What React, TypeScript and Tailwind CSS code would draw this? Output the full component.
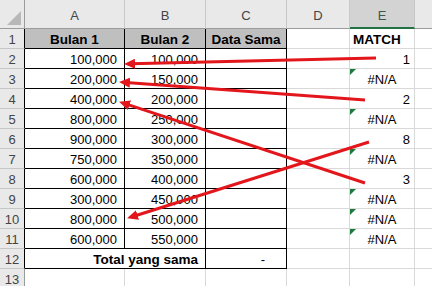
import React from "react";

interface Row {
  a: string;
  b: string;
  e: string;
}

const rows: Row[] = [
  { a: "100,000", b: "100,000", e: "1" },
  { a: "200,000", b: "150,000", e: "#N/A" },
  { a: "400,000", b: "200,000", e: "2" },
  { a: "800,000", b: "250,000", e: "#N/A" },
  { a: "900,000", b: "300,000", e: "8" },
  { a: "750,000", b: "350,000", e: "#N/A" },
  { a: "600,000", b: "400,000", e: "3" },
  { a: "300,000", b: "450,000", e: "#N/A" },
  { a: "800,000", b: "500,000", e: "#N/A" },
  { a: "600,000", b: "550,000", e: "#N/A" },
];

// arrows drawn on top of the sheet: [tailX, tailY, tipX, tipY]
const arrows: [number, number, number, number][] = [
  [376, 58, 125, 64],
  [365, 100, 120, 82],
  [365, 183, 120, 102],
  [369, 142, 128, 218],
];

const grid = "border-[#d9d9d9]";

const RowHead: React.FC<{ n: number; table?: boolean }> = ({ n, table }) => (
  <div
    className={`bg-[#e9e9e9] border-b border-b-[#c6c6c6] border-r flex items-end justify-center text-[13px] leading-[17px] text-[#444] ${
      table ? "border-r-black" : "border-r-[#9b9b9b]"
    }`}
  >
    {n}
  </div>
);

const ErrorFlag: React.FC = () => (
  <div className="absolute left-0 top-0 w-0 h-0 border-t-[6px] border-t-[#1d7a3a] border-r-[6px] border-r-transparent" />
);

const App: React.FC = () => {
  return (
    <div
      className="w-[432px] h-[286px] overflow-hidden relative bg-white text-black"
      style={{ fontFamily: '"Liberation Sans", Arial, sans-serif' }}
    >
      <div className="grid grid-cols-[25px_100px_81px_81px_63px_65px_1fr] grid-rows-[29px_repeat(13,20px)] text-[13px] leading-[16px]">
        {/* Column headers */}
        <div className="bg-[#e9e9e9] border-b border-r border-[#9b9b9b] relative">
          <div className="absolute right-[3px] bottom-[3px] w-0 h-0 border-l-[14px] border-l-transparent border-b-[14px] border-b-[#b8b8b8]" />
        </div>
        {["A", "B", "C", "D"].map((c) => (
          <div
            key={c}
            className="bg-[#e9e9e9] border-b border-b-[#9b9b9b] border-r border-r-[#c8c8c8] flex items-end justify-center pb-[4px] text-[13px] text-[#444]"
          >
            {c}
          </div>
        ))}
        <div className="bg-[#d3d3d3] border-b-2 border-b-[#217346] border-r border-r-[#c8c8c8] flex items-end justify-center pb-[3px] text-[13px] text-[#3c5a48]">
          E
        </div>
        <div className="bg-[#e9e9e9] border-b border-b-[#9b9b9b]" />

        {/* Row 1 */}
        <RowHead n={1} table />
        {["Bulan 1", "Bulan 2", "Data Sama"].map((h) => (
          <div
            key={h}
            className="bg-[#bfbfbf] border-r border-b border-black flex items-end justify-center font-bold text-[13.5px]"
          >
            {h}
          </div>
        ))}
        <div className={`border-r border-b ${grid}`} />
        <div className={`border-r border-b ${grid} flex items-end pl-[3px] font-bold text-[13.5px]`}>MATCH</div>
        <div className={`border-b ${grid}`} />

        {/* Rows 2-11 */}
        {rows.map((r, i) => {
          const isErr = r.e === "#N/A";
          return (
            <React.Fragment key={i}>
              <RowHead n={i + 2} table />
              <div className="border-r border-b border-black flex items-end justify-end pr-[7px]">{r.a}</div>
              <div className="border-r border-b border-black flex items-end justify-end pr-[7px]">{r.b}</div>
              <div className="border-r border-b border-black" />
              <div className={`border-r border-b ${grid}`} />
              <div
                className={`relative border-r border-b ${grid} flex items-end ${
                  isErr ? "justify-center" : "justify-end pr-[4px]"
                }`}
              >
                {isErr && <ErrorFlag />}
                {r.e}
              </div>
              <div className={`border-b ${grid}`} />
            </React.Fragment>
          );
        })}

        {/* Row 12 */}
        <RowHead n={12} table />
        <div className="col-span-2 border-r border-b border-black flex items-end justify-end pr-[7px] font-bold text-[13.5px]">
          Total yang sama
        </div>
        <div className="border-r border-b border-black flex items-end justify-end pr-[21px]">-</div>
        <div className={`border-r border-b ${grid}`} />
        <div className={`border-r border-b ${grid}`} />
        <div className={`border-b ${grid}`} />

        {/* Row 13 */}
        <RowHead n={13} />
        <div className={`border-r border-b ${grid}`} />
        <div className={`border-r border-b ${grid}`} />
        <div className={`border-r border-b ${grid}`} />
        <div className={`border-r border-b ${grid}`} />
        <div className={`border-r border-b ${grid}`} />
        <div className={`border-b ${grid}`} />
      </div>

      {/* Red arrows overlay */}
      <svg className="absolute inset-0 pointer-events-none" width="432" height="286" viewBox="0 0 432 286">
        <defs>
          <marker
            id="head"
            markerUnits="userSpaceOnUse"
            markerWidth="11"
            markerHeight="10"
            refX="10"
            refY="5"
            orient="auto"
          >
            <path d="M0,0 L11,5 L0,10 z" fill="#e3161c" />
          </marker>
        </defs>
        {arrows.map(([x1, y1, x2, y2], i) => {
          // stop the stroke short of the tip so the head stays sharp
          const dx = x2 - x1;
          const dy = y2 - y1;
          const len = Math.hypot(dx, dy);
          const ex = x2 - (dx / len) * 6;
          const ey = y2 - (dy / len) * 6;
          return (
            <g key={i}>
              <line x1={x1} y1={y1} x2={ex} y2={ey} stroke="#e3161c" strokeWidth="3" />
              <line
                x1={ex}
                y1={ey}
                x2={x2}
                y2={y2}
                stroke="transparent"
                strokeWidth="1"
                markerEnd="url(#head)"
              />
            </g>
          );
        })}
      </svg>
    </div>
  );
};

export default App;
